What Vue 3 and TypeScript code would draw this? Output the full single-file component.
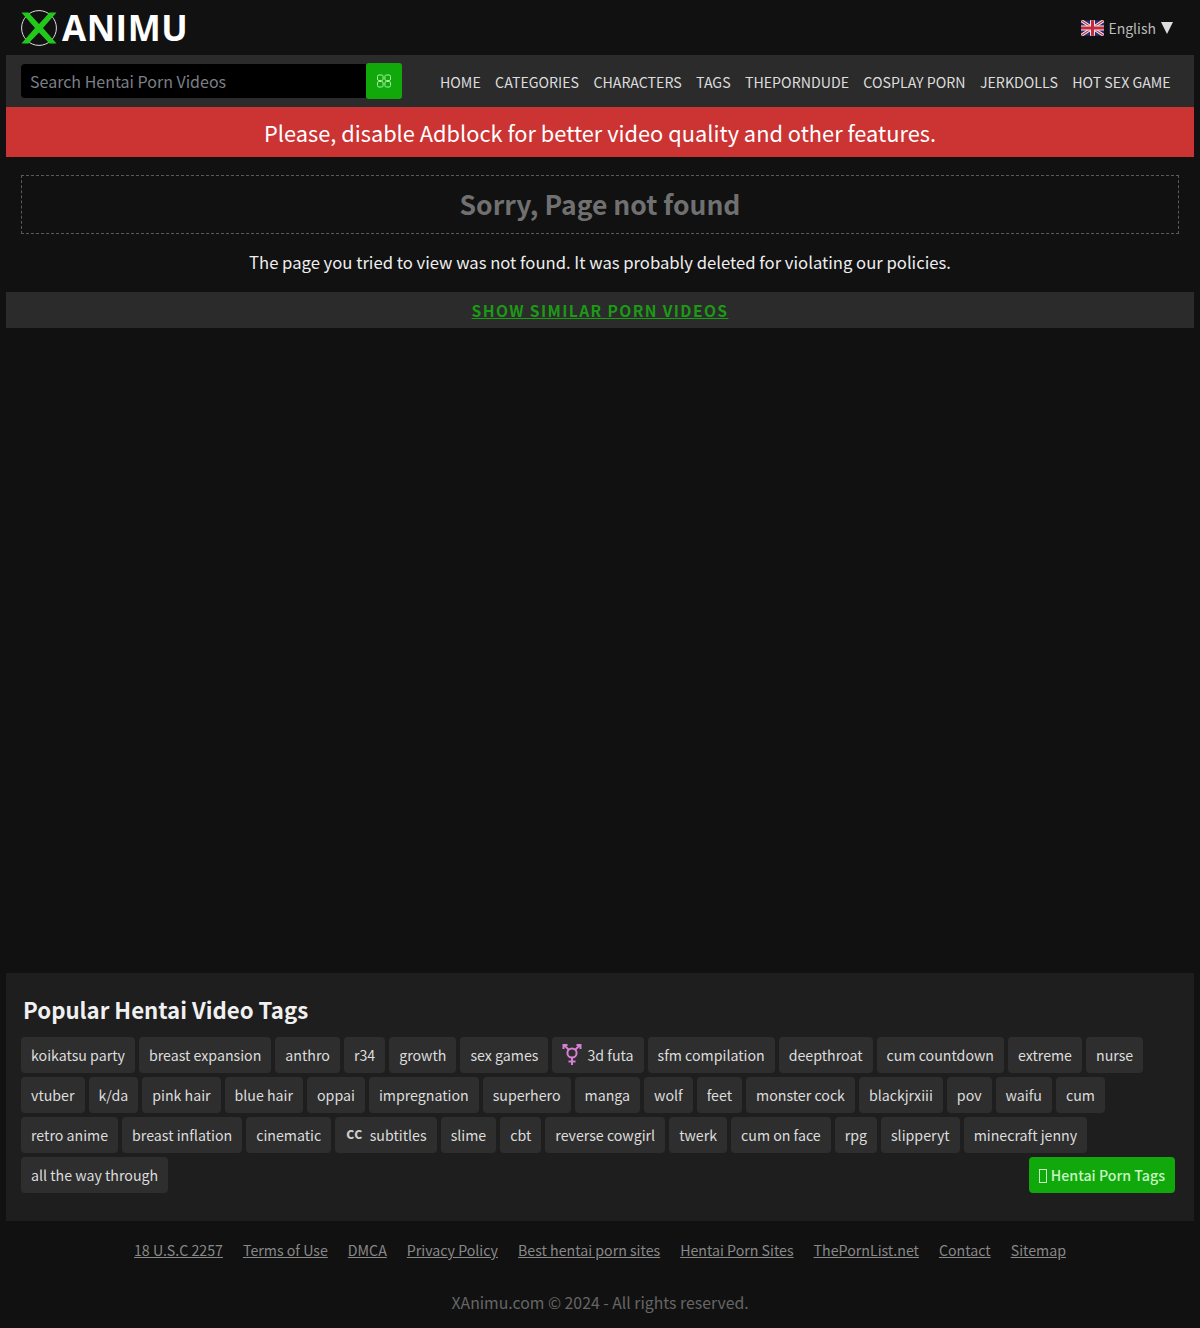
<script setup lang="ts">
import { ref } from 'vue'

interface Tag {
  label: string
  icon?: 'trans' | 'cc'
}

const navLinks = ['HOME', 'CATEGORIES', 'CHARACTERS', 'TAGS', 'THEPORNDUDE', 'COSPLAY PORN', 'JERKDOLLS', 'HOT SEX GAME']

const tags = ref<Tag[]>([
  { label: 'koikatsu party' },
  { label: 'breast expansion' },
  { label: 'anthro' },
  { label: 'r34' },
  { label: 'growth' },
  { label: 'sex games' },
  { label: '3d futa', icon: 'trans' },
  { label: 'sfm compilation' },
  { label: 'deepthroat' },
  { label: 'cum countdown' },
  { label: 'extreme' },
  { label: 'nurse' },
  { label: 'vtuber' },
  { label: 'k/da' },
  { label: 'pink hair' },
  { label: 'blue hair' },
  { label: 'oppai' },
  { label: 'impregnation' },
  { label: 'superhero' },
  { label: 'manga' },
  { label: 'wolf' },
  { label: 'feet' },
  { label: 'monster cock' },
  { label: 'blackjrxiii' },
  { label: 'pov' },
  { label: 'waifu' },
  { label: 'cum' },
  { label: 'retro anime' },
  { label: 'breast inflation' },
  { label: 'cinematic' },
  { label: 'subtitles', icon: 'cc' },
  { label: 'slime' },
  { label: 'cbt' },
  { label: 'reverse cowgirl' },
  { label: 'twerk' },
  { label: 'cum on face' },
  { label: 'rpg' },
  { label: 'slipperyt' },
  { label: 'minecraft jenny' },
  { label: 'all the way through' }
])

const footerLinks = ['18 U.S.C 2257', 'Terms of Use', 'DMCA', 'Privacy Policy', 'Best hentai porn sites', 'Hentai Porn Sites', 'ThePornList.net', 'Contact', 'Sitemap']
</script>

<template>
  <div class="page">
    <header class="top">
      <a class="logo">
        <svg class="logo-mark" width="38" height="38" viewBox="0 0 38 38">
          <circle cx="19" cy="19" r="17.4" fill="none" stroke="#ddd" stroke-width="1" />
          <path d="M1.5 3.5h7L19 15 29.500 3.500h7L23 19l13.500 15.500h-7L19 23.500 8.500 34.500h-7L15 19z" fill="#22c91a" />
        </svg>
        <span>ANIMU</span>
      </a>
      <div class="lang">
        <svg width="23" height="16" viewBox="0 0 60 40">
          <rect width="60" height="40" fill="#2a2a6e" />
          <path d="M0 0l60 40M60 0L0 40" stroke="#eee" stroke-width="8" />
          <path d="M0 0l60 40M60 0L0 40" stroke="#c8283c" stroke-width="3" />
          <path d="M30 0v40M0 20h60" stroke="#eee" stroke-width="13" />
          <path d="M30 0v40M0 20h60" stroke="#c8283c" stroke-width="8" />
        </svg>
        <span>English</span>
        <i class="caret" />
      </div>
    </header>

    <nav class="navbar">
      <form class="search" @submit.prevent>
        <input type="text" placeholder="Search Hentai Porn Videos" />
        <button type="submit" aria-label="Search">
          <svg width="14" height="14" viewBox="0 0 14 14" fill="none" stroke="#a6f29f" stroke-width="1">
            <rect x="0.5" y="1" width="5.600" height="5.500" rx="1.400" />
            <rect x="7.900" y="1" width="5.600" height="5.500" rx="1.400" />
            <rect x="0.5" y="7.500" width="5.600" height="5.500" rx="1.400" />
            <rect x="7.900" y="7.500" width="5.600" height="5.500" rx="1.400" />
          </svg>
        </button>
      </form>
      <ul class="nav-links">
        <li v-for="link in navLinks" :key="link"><a>{{ link }}</a></li>
      </ul>
    </nav>

    <div class="adblock">Please, disable Adblock for better video quality and other features.</div>

    <main class="content">
      <h1 class="not-found">Sorry, Page not found</h1>
      <p class="message">The page you tried to view was not found. It was probably deleted for violating our policies.</p>
    </main>

    <div class="similar"><a>SHOW SIMILAR PORN VIDEOS</a></div>

    <div class="spacer" />

    <section class="tags-box">
      <h2>Popular Hentai Video Tags</h2>
      <div class="tags">
        <a v-for="tag in tags" :key="tag.label" class="tag">
          <svg v-if="tag.icon === 'trans'" class="icon-trans" width="20" height="22" viewBox="0 0 20 22" fill="none" stroke="#d77fd6" stroke-width="2">
            <circle cx="10" cy="9" r="4.600" />
            <path d="M10 13.600V21M6.500 17.500h7M6.600 5.600L2.500 1.500M13.400 5.600l4.100-4.100M1.500 5V1h4M18.500 5V1h-4" />
          </svg>
          <span v-else-if="tag.icon === 'cc'" class="icon-cc">CC</span>
          {{ tag.label }}
        </a>
        <a class="more"><i class="tofu" />Hentai Porn Tags</a>
      </div>
    </section>

    <footer class="footer">
      <ul>
        <li v-for="link in footerLinks" :key="link"><a>{{ link }}</a></li>
      </ul>
      <p>XAnimu.com © 2024 - All rights reserved.</p>
    </footer>
  </div>
</template>

<style>
html,
body {
  background: #111;
}
</style>

<style scoped>
.page {
  font-family: 'Noto Sans CJK JP', 'Noto Sans', sans-serif;
  color: #ddd;
  height: 1328px;
  padding: 0 6px;
  box-sizing: border-box;
  display: flex;
  flex-direction: column;
}

.top {
  height: 55px;
  display: flex;
  align-items: center;
  justify-content: space-between;
  padding: 0 21px 0 14px;
}

.logo {
  display: flex;
  align-items: center;
  color: #fff;
  font-family: 'Open Sans', sans-serif;
  font-size: 35px;
  font-weight: 700;
  letter-spacing: 0.5px;
}

.logo-mark {
  margin-right: 4px;
}

.lang {
  display: flex;
  align-items: center;
  gap: 4px;
  font-size: 14px;
  color: #bbb;
  height: 20px;
}

.caret {
  margin-left: 1px;
  width: 0;
  height: 0;
  border-left: 6.500px solid transparent;
  border-right: 6.500px solid transparent;
  border-top: 12px solid #ddd;
}

.navbar {
  height: 52px;
  background: #2b2b2b;
  display: flex;
  align-items: center;
  padding: 0 15px;
}

.search {
  display: flex;
  align-items: center;
  margin-right: 38px;
}

.search input {
  width: 345px;
  height: 34px;
  box-sizing: border-box;
  background: #000;
  border: none;
  border-radius: 4px 0 0 4px;
  padding: 0 9px;
  color: #ddd;
  font-family: inherit;
  font-size: 16px;
  outline: none;
}

.search input::placeholder {
  color: #7b7f86;
  opacity: 1;
}

.search button {
  width: 36px;
  height: 36px;
  background: #10a80a;
  border: none;
  border-radius: 3px;
  display: flex;
  align-items: center;
  justify-content: center;
  padding: 0;
}

.nav-links {
  list-style: none;
  display: flex;
  gap: 14.350px;
  margin: 0;
  padding: 1px 0 0;
  font-size: 14.200px;
  color: #ddd;
  white-space: nowrap;
}

.adblock {
  height: 50px;
  line-height: 52px;
  background: #cc3333;
  color: #fff;
  text-align: center;
  font-size: 21.800px;
}

.content {
  padding: 18px 15px 0;
}

.not-found {
  margin: 0;
  height: 59px;
  box-sizing: border-box;
  border: 1px dashed #5a5a5a;
  color: #707070;
  font-size: 26.500px;
  font-weight: 700;
  line-height: 55px;
  text-align: center;
}

.message {
  margin: 16px 0;
  height: 26px;
  line-height: 24px;
  text-align: center;
  font-size: 16.650px;
  color: #eee;
}

.similar {
  height: 36px;
  line-height: 36px;
  background: #2b2b2b;
  text-align: center;
  font-size: 15.600px;
  font-weight: 700;
  letter-spacing: 1.400px;
}

.similar a {
  color: #1c9a15;
  text-decoration: underline;
}

.spacer {
  height: 645px;
}

.tags-box {
  height: 248px;
  box-sizing: border-box;
  background: #1e1e1e;
  padding: 18px 15px 0;
}

.tags-box h2 {
  margin: 0 0 10px 2px;
  font-size: 22.200px;
  font-weight: 700;
  line-height: 36px;
  color: #f0f0f0;
}

.tags {
  display: flex;
  flex-wrap: wrap;
  gap: 4px;
}

.tag {
  height: 36px;
  box-sizing: border-box;
  padding: 0 10px;
  display: inline-flex;
  align-items: center;
  background: #2e2e2e;
  border-radius: 4px;
  font-size: 14.200px;
  color: #ddd;
  white-space: nowrap;
}

.icon-trans {
  margin-right: 5px;
}

.icon-cc {
  margin: -4px 7px 0 1px;
  font-size: 12px;
  font-weight: 900;
  letter-spacing: 0.5px;
  color: #ccc;
}

.more {
  margin-left: auto;
  margin-right: 4px;
  height: 36px;
  padding: 0 10px;
  display: inline-flex;
  align-items: center;
  background: #10a80a;
  border-radius: 4px;
  color: #c8f5c4;
  font-size: 14.200px;
  font-weight: 500;
  white-space: nowrap;
}

.tofu {
  width: 6px;
  height: 12px;
  border: 1px solid #c8f5c4;
  margin: 2px 4px 0 0;
}

.footer {
  text-align: center;
  color: #666;
}

.footer ul {
  list-style: none;
  display: flex;
  justify-content: center;
  gap: 20px;
  margin: 18px 0 0;
  padding: 0;
  font-size: 14.200px;
  line-height: 22px;
  color: #888;
}

.footer a {
  text-decoration: underline;
}

.footer p {
  margin: 30px 0 0;
  font-size: 15.800px;
  line-height: 24px;
}
</style>
